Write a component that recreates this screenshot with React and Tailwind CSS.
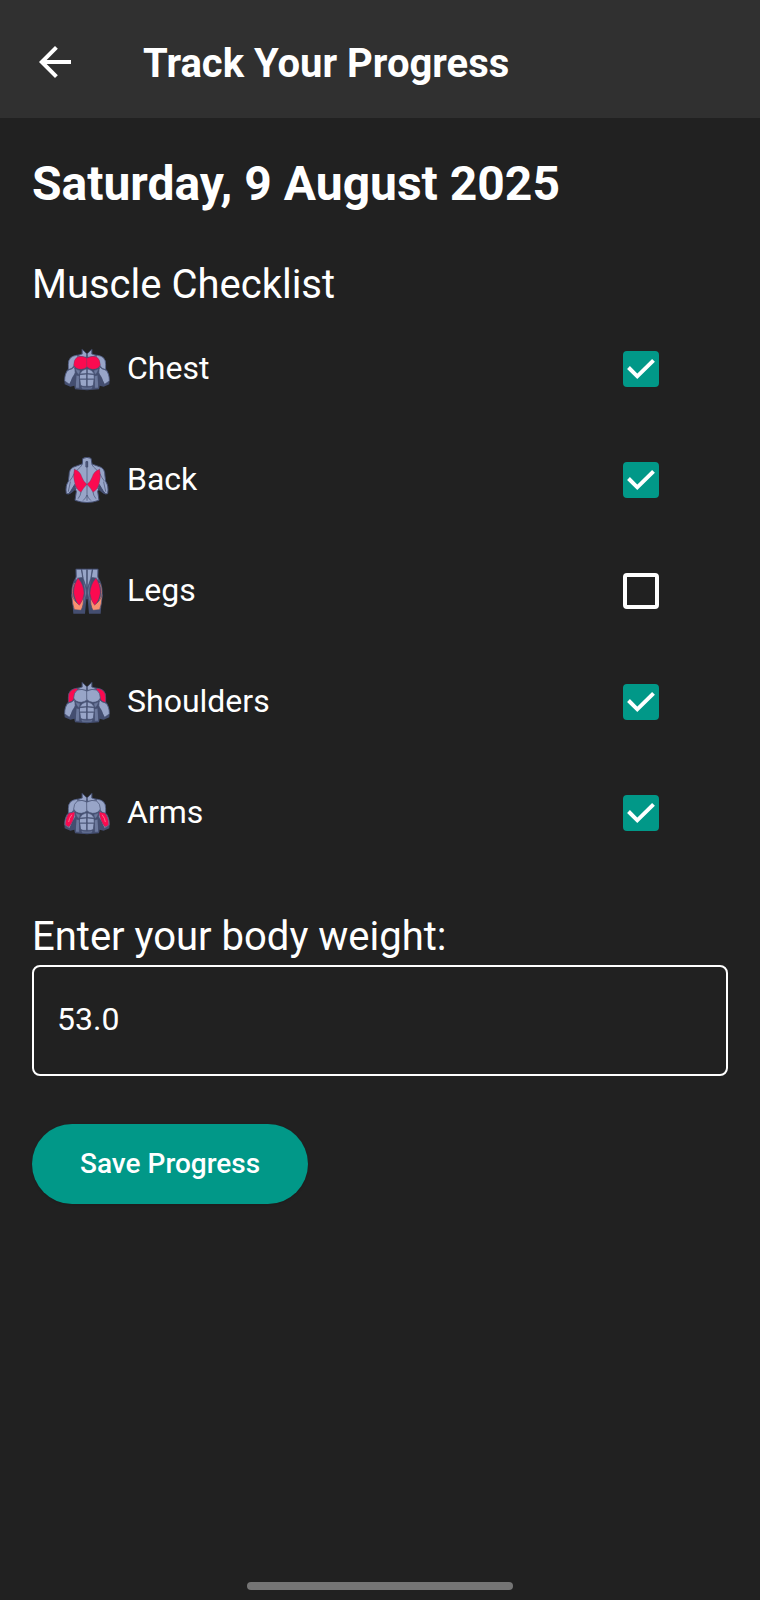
import { useState } from "react";

const BODY = "#98a5c8";
const SHADE = "#444e70";
const MID = "#6b789c";
const HIGHLIGHT = "#fb0a50";

function Torso({ highlight }) {
  const chest = highlight === "chest" ? HIGHLIGHT : BODY;
  const shoulder = highlight === "shoulders" ? HIGHLIGHT : BODY;
  return (
    <svg viewBox="24 16 144 144" className="size-12 shrink-0" aria-hidden="true">
      <path d="M80 28 L80 42 L60 47 Q39 51 39 74 L39 88 Q29 98 28 118 L29 134 L46 141 L58 138 L60 149 Q96 154 132 149 L134 138 L146 141 L163 134 L164 118 Q163 98 153 88 L153 74 Q153 51 132 47 L112 42 L112 28 L96 43 Z" fill={SHADE} />
      <g stroke={SHADE} strokeWidth="2" strokeLinejoin="round" strokeLinecap="round">
        <path d="M64 47 Q40 50 40 74 L40 90 Q54 88 58 76 Q57 60 80 52 Z" fill={shoulder} />
        <path d="M128 47 Q152 50 152 74 L152 90 Q138 88 134 76 Q135 60 112 52 Z" fill={shoulder} />
        <path d="M40 91 Q29 100 29 124 Q37 129 43 134 Q52 120 61 104 L59 80 Q52 90 40 91 Z" fill={BODY} />
        <path d="M152 91 Q163 100 163 124 Q155 129 149 134 Q140 120 131 104 L133 80 Q140 90 152 91 Z" fill={BODY} />
        <path d="M46 132 Q51 112 61 100 L62 122 Q55 130 50 138 Z M146 132 Q141 112 131 100 L130 122 Q137 130 142 138 Z" fill={SHADE} />
        {highlight === "arms" && (
          <g strokeWidth="1">
            <path d="M42 88 Q31 101 31 124 L42 130 Q57 112 60 84 Q50 88 42 88 Z" fill={HIGHLIGHT} />
            <path d="M150 88 Q161 101 161 124 L150 130 Q135 112 132 84 Q142 88 150 88 Z" fill={HIGHLIGHT} />
            <path d="M50 94 Q42 104 41 114 M142 94 Q150 104 151 114" fill="none" stroke="#f4708c" strokeWidth="3" />
          </g>
        )}
        <path d="M82 30 L82 43 L66 49 L94 53 L95 43 Z" fill={BODY} />
        <path d="M110 30 L110 43 L126 49 L98 53 L97 43 Z" fill={BODY} />
        <g strokeWidth={highlight === "chest" ? 1 : 2}>
          <path d="M96 55 Q80 47 67 52 Q56 60 56 76 Q62 89 79 89 Q92 87 96 81 Z" fill={chest} />
          <path d="M96 55 Q112 47 125 52 Q136 60 136 76 Q130 89 113 89 Q100 87 96 81 Z" fill={chest} />
        </g>
        <path d="M60 86 Q67 91 76 92 L73 106 Q63 100 60 86 Z M132 86 Q125 91 116 92 L119 106 Q129 100 132 86 Z" fill={MID} />
        <path d="M64 106 L74 109 L73 146 L62 145 Z M128 106 L118 109 L119 146 L130 145 Z" fill={MID} />
        <path d="M95 87 Q80 90 74 103 L95 102 Z M97 87 Q112 90 118 103 L97 102 Z" fill={BODY} />
        <path d="M75 105 L95 103 V118 H74 Z M97 103 L117 105 L118 118 H97 Z" fill={BODY} />
        <path d="M75 119 H95 V140 Q82 142 77 137 Z M97 119 H117 L115 137 Q110 142 97 140 Z" fill={BODY} />
        <path d="M78 141 Q96 145 114 141 L110 148 H82 Z" fill={MID} />
      </g>
    </svg>
  );
}

function BackView() {
  return (
    <svg viewBox="24 18 144 144" className="size-12 shrink-0" aria-hidden="true">
      <g stroke={SHADE} strokeWidth="3" strokeLinejoin="round" strokeLinecap="round">
        <path d="M84 25 Q96 19 108 25 L111 42 L136 51 Q150 56 150 78 L152 94 Q162 108 158 131 L151 132 L134 112 L128 124 L132 151 Q96 164 60 151 L64 124 L58 112 L41 132 L34 131 Q30 108 40 94 L42 78 Q42 56 56 51 L81 42 Z" fill={BODY} />
        <path d="M59 104 L48 122 L41 132 L49 128 L63 116 Z M133 104 L144 122 L151 132 L143 128 L129 116 Z" fill={SHADE} />
        <g strokeWidth="1">
          <path d="M58 58 Q75 62 81 82 Q85 95 96 103 Q83 116 78 127 Q64 119 60 102 Q53 80 58 58 Z" fill={HIGHLIGHT} />
          <path d="M134 58 Q117 62 111 82 Q107 95 96 103 Q109 116 114 127 Q128 119 132 102 Q139 80 134 58 Z" fill={HIGHLIGHT} />
        </g>
        <path d="M96 34 V151" fill="none" strokeWidth="2" />
        <path d="M94 35 H98 V51 H94 Z" fill={SHADE} />
        <path
          d="M67 60 Q78 51 82 43 M125 60 Q114 51 110 43 M44 93 Q53 82 57 72 M148 93 Q139 82 135 72 M46 96 L40 124 M146 96 L152 124 M70 145 Q77 136 78 127 M122 145 Q115 136 114 127 M85 151 Q93 144 96 135 Q99 144 107 151"
          fill="none"
          strokeWidth="2"
        />
      </g>
    </svg>
  );
}

function LegsView() {
  return (
    <svg viewBox="24 21 144 144" className="size-12 shrink-0" aria-hidden="true">
      <path d="M62 26 H130 L130 52 Q144 73 143 103 Q139 130 137 161 H102 L98 118 H94 L90 161 H55 Q53 130 49 103 Q48 73 62 52 Z" fill={SHADE} />
      <g stroke={SHADE} strokeWidth="2" strokeLinejoin="round" strokeLinecap="round">
        <path d="M64 28 H79 L83 53 Q70 50 60 64 L64 50 Z M128 28 H113 L109 53 Q122 50 132 64 L128 50 Z" fill={BODY} />
        <path d="M81 28 H95 V86 L85 56 Z M111 28 H97 V86 L107 56 Z" fill={BODY} />
        <path d="M82 58 Q94 77 95 99 L84 143 Q84 124 88 106 Q90 85 82 58 Z M110 58 Q98 77 97 99 L108 143 Q108 124 104 106 Q102 85 110 58 Z" fill={MID} />
        <path d="M50 104 Q52 134 58 149 L78 151 Q86 138 86 108 Q79 129 71 132 Q57 124 50 104 Z M142 104 Q140 134 134 149 L114 151 Q106 138 106 108 Q113 129 121 132 Q135 124 142 104 Z" fill="#f99070" />
        <path d="M58 70 Q46 96 58 120 M134 70 Q146 96 134 120" fill="none" stroke="#d97a70" />
        <g strokeWidth="1">
          <path d="M69 54 Q87 75 87 100 Q84 124 73 136 Q59 123 56 97 Q56 74 69 54 Z" fill={HIGHLIGHT} />
          <path d="M123 54 Q105 75 105 100 Q108 124 119 136 Q133 123 136 97 Q136 74 123 54 Z" fill={HIGHLIGHT} />
        </g>
      </g>
    </svg>
  );
}

const muscles = [
  { name: "Chest", icon: <Torso highlight="chest" />, done: true },
  { name: "Back", icon: <BackView />, done: true },
  { name: "Legs", icon: <LegsView />, done: false },
  { name: "Shoulders", icon: <Torso highlight="shoulders" />, done: true },
  { name: "Arms", icon: <Torso highlight="arms" />, done: true },
];

function MuscleRow({ name, icon, done }) {
  const [checked, setChecked] = useState(done);
  return (
    <li>
      <label className="flex h-[111px] items-center gap-4 pr-[69px] pl-[31px]">
        {icon}
        <span className="flex-1 pb-0.5 text-[32px] leading-10">{name}</span>
        <span className="grid size-9 shrink-0">
          <input
            type="checkbox"
            checked={checked}
            onChange={(e) => setChecked(e.target.checked)}
            className="peer col-start-1 row-start-1 size-9 appearance-none rounded-[4px] border-4 border-white checked:border-[#019888] checked:bg-[#019888]"
          />
          <svg
            viewBox="0 0 36 36"
            className="pointer-events-none invisible col-start-1 row-start-1 size-9 peer-checked:visible"
            aria-hidden="true"
          >
            <path d="M5.5 16.5 L14.3 25.3 L30.5 9.3" fill="none" stroke="#fff" strokeWidth="4" />
          </svg>
        </span>
      </label>
    </li>
  );
}

export default function App() {
  const [weight, setWeight] = useState("53.0");
  return (
    <div className="flex min-h-screen flex-col bg-[#212121] font-[Roboto,sans-serif] text-white">
      <header className="flex items-center gap-16 bg-[#303030] px-[31px] pt-[34px] pb-7">
        <button type="button" aria-label="Back" className="size-12 shrink-0">
          <svg viewBox="0 0 24 24" className="size-12" fill="currentColor" aria-hidden="true">
            <path d="M20 11H7.83l5.59-5.59L12 4l-8 8 8 8 1.41-1.41L7.83 13H20v-2z" />
          </svg>
        </button>
        <h1 className="pt-1 text-[40px] leading-[52px] font-bold">Track Your Progress</h1>
      </header>

      <main className="flex flex-1 flex-col items-start px-8 pt-9">
        <h2 className="text-5xl leading-[60px] font-bold">Saturday, 9 August 2025</h2>
        <h3 className="mt-[46px] text-[40px] leading-[50px]">Muscle Checklist</h3>
        <ul className="mt-[3px] w-full">
          {muscles.map((m) => (
            <MuscleRow key={m.name} {...m} />
          ))}
        </ul>

        <label htmlFor="weight" className="mt-11 text-[40px] leading-[50px]">
          Enter your body weight:
        </label>
        <input
          id="weight"
          type="text"
          inputMode="decimal"
          value={weight}
          onChange={(e) => setWeight(e.target.value)}
          className="mt-[3px] h-[111px] w-full rounded-lg border-2 border-white bg-transparent px-[23px] pb-1 text-[32px] outline-none"
        />
        <button
          type="button"
          className="mt-12 rounded-full bg-[#019888] px-12 py-5 text-[28px] leading-10 font-medium shadow-sm"
        >
          Save Progress
        </button>
      </main>

      <footer className="flex justify-center pb-[10px]">
        <div className="h-2 w-[35%] rounded-full bg-[#757575]" />
      </footer>
    </div>
  );
}
